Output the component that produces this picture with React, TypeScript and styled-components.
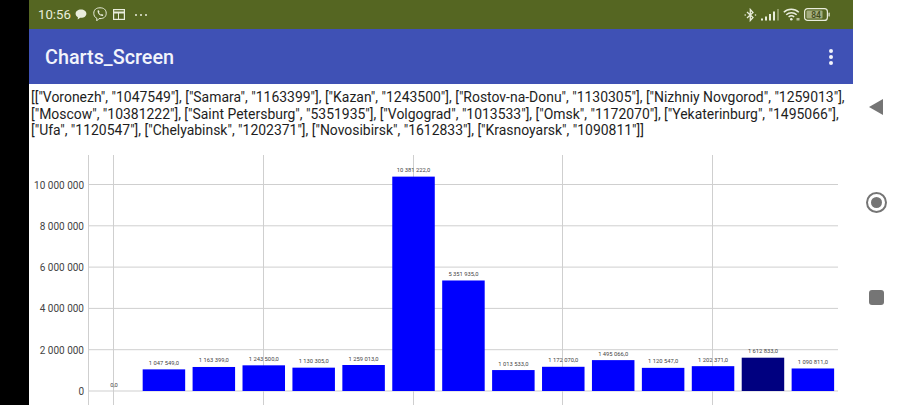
import React from 'react';
import styled, {createGlobalStyle} from 'styled-components';

const GlobalStyle = createGlobalStyle`
  html, body {
    margin: 0;
    height: 100%;
    background: #fff;
    overflow: hidden;
  }
  #root {
    height: 100%;
  }
`;

const Device = styled.div`
  display: grid;
  grid-template-columns: 29px 824px 47px;
  width: 900px;
  height: 405px;
  overflow: hidden;
  font-family: Roboto, 'Liberation Sans', sans-serif;
`;

const Bezel = styled.div`
  background: #000;
`;

const Screen = styled.main`
  display: flex;
  flex-direction: column;
  min-width: 0;
  background: #fff;
`;

const StatusBar = styled.header`
  display: flex;
  align-items: center;
  height: 29px;
  padding: 0 23px 0 9px;
  box-sizing: border-box;
  background: #556622;
  color: #e9eddc;
`;

const Clock = styled.span`
  font-size: 13.2px;
  margin-right: 4px;
`;

const StatusGroup = styled.div`
  display: flex;
  align-items: center;
  gap: ${p => p.$gap}px;
`;

const Spacer = styled.div`
  flex: 1;
`;

const StatusDots = styled.span`
  display: flex;
  gap: 3px;
  margin-left: 10px;
`;

const StatusDot = styled.i`
  width: 2px;
  height: 2px;
  border-radius: 50%;
  background: #e9eddc;
`;

const AppBar = styled.div`
  display: flex;
  align-items: center;
  justify-content: space-between;
  height: 55px;
  padding: 2px 20px 0 16px;
  box-sizing: border-box;
  background: #3f51b5;
  color: #f2f4fb;
`;

const Title = styled.h1`
  margin: 0;
  font-size: 19.8px;
  font-weight: 500;
`;

const Overflow = styled.div`
  display: flex;
  flex-direction: column;
  gap: 1.5px;
  margin-top: -1px;
`;

const OverflowDot = styled.i`
  width: 4.5px;
  height: 4.5px;
  border-radius: 50%;
  background: #f2f4fb;
`;

const DataDump = styled.div`
  height: 71px;
  padding: 5px 0 0 2px;
  box-sizing: border-box;
  font-size: 13.95px;
  line-height: 16.5px;
  color: #1e1e1e;
`;

const DumpLine = styled.div`
  white-space: nowrap;
`;

const ChartFrame = styled.svg`
  display: block;
  width: 824px;
  height: 250px;
`;

const GridLine = styled.line`
  stroke: #cfcfcf;
  stroke-width: 1;
`;

const AxisLabel = styled.text`
  font-size: 10px;
  fill: #444;
  text-anchor: end;
`;

const ValueLabel = styled.text`
  font-size: 5.8px;
  fill: #444;
  text-anchor: middle;
`;

const NavRail = styled.nav`
  display: grid;
  grid-auto-rows: 95.5px;
  justify-items: center;
  align-items: center;
  align-content: start;
  padding-top: 59px;
  padding-right: 1px;
  background: #fff;
`;

const BackTriangle = styled.div`
  width: 0;
  height: 0;
  border-top: 8.5px solid transparent;
  border-bottom: 8.5px solid transparent;
  border-right: 14px solid #757575;
`;

const HomeRing = styled.div`
  display: flex;
  align-items: center;
  justify-content: center;
  width: 21px;
  height: 21px;
  box-sizing: border-box;
  border: 2px solid #757575;
  border-radius: 50%;

  &::after {
    content: '';
    width: 11px;
    height: 11px;
    border-radius: 50%;
    background: #757575;
  }
`;

const RecentSquare = styled.div`
  width: 15px;
  height: 15px;
  border-radius: 3px;
  background: #757575;
`;

const dumpLines = [
  '[["Voronezh", "1047549"], ["Samara", "1163399"], ["Kazan", "1243500"], ["Rostov-na-Donu", "1130305"], ["Nizhniy Novgorod", "1259013"],',
  '["Moscow", "10381222"], ["Saint Petersburg", "5351935"], ["Volgograd", "1013533"], ["Omsk", "1172070"], ["Yekaterinburg", "1495066"],',
  '["Ufa", "1120547"], ["Chelyabinsk", "1202371"], ["Novosibirsk", "1612833"], ["Krasnoyarsk", "1090811"]]',
];

const values = [
  0, 1047549, 1163399, 1243500, 1130305, 1259013, 10381222, 5351935, 1013533, 1172070, 1495066, 1120547, 1202371,
  1612833, 1090811,
];

const HIGHLIGHT = 13;
const BASE_Y = 236;
const PX_PER_UNIT = 206.5 / 10000000;
const AXIS_X = 60;
const RIGHT_X = 809;
const FIRST_X = 85;
const STEP_X = 49.92;
const BAR_W = 42.5;

const yOf = (v: number) => BASE_Y - v * PX_PER_UNIT;

const group = (v: number, suffix = '') => String(v).replace(/\B(?=(\d{3})+(?!\d))/g, ' ') + suffix;

const Chart = () => (
  <ChartFrame viewBox="0 0 824 250">
    {[AXIS_X - 0.5, 84.5, 234.5, 384.5, 533.5, 683.5].map(x => (
      <GridLine key={x} x1={x} x2={x} y1={0} y2={250} />
    ))}
    {[0, 2, 4, 6, 8, 10].map(m => (
      <React.Fragment key={m}>
        <GridLine x1={AXIS_X} x2={RIGHT_X} y1={yOf(m * 1000000)} y2={yOf(m * 1000000)} />
        <AxisLabel x={AXIS_X - 5} y={yOf(m * 1000000) + 4}>
          {group(m * 1000000)}
        </AxisLabel>
      </React.Fragment>
    ))}
    {values.map((v, i) => {
      const cx = FIRST_X + i * STEP_X;
      return (
        <React.Fragment key={i}>
          {v > 0 && (
            <rect
              x={cx - BAR_W / 2}
              y={yOf(v)}
              width={BAR_W}
              height={v * PX_PER_UNIT}
              fill={i === HIGHLIGHT ? '#000080' : '#0000ff'}
            />
          )}
          <ValueLabel x={cx} y={yOf(v) - 4.5}>
            {group(v, ',0')}
          </ValueLabel>
        </React.Fragment>
      );
    })}
  </ChartFrame>
);

const ChatIcon = () => (
  <svg width="12" height="11" viewBox="0 0 12 11">
    <path d="M6 .5C2.9.5.6 2.3.6 4.700c0 1.500.9 2.700 2.300 3.500L2.700 10.500 5.200 8.800H6c3.100 0 5.400-1.800 5.400-4.100S9.100.5 6 .5z" fill="#e9eddc" />
  </svg>
);

const ViberIcon = () => (
  <svg width="14" height="15" viewBox="0 0 14 15" fill="none" stroke="#e9eddc">
    <path d="M7 .8c3.600 0 6.200 1.700 6.200 5.400S10.600 11.600 7 11.600H6L3.800 13.800V11.200C1.700 10.300.8 8.500.8 6.200.8 2.500 3.400.8 7 .8z" strokeWidth="1" />
    <path d="M4.600 3.600l1.200-.3.800 1.600-.7.700c.4 1 1.100 1.700 2.100 2.100l.7-.7 1.600.8-.3 1.200c-3 .3-5.700-2.400-5.400-5.400z" fill="#e9eddc" stroke="none" />
  </svg>
);

const WidgetIcon = () => (
  <svg width="12" height="11" viewBox="0 0 12 11" fill="none" stroke="#e9eddc">
    <rect x=".6" y=".6" width="10.800" height="9.800" strokeWidth="1.200" />
    <path d="M.6 3.500h10.800" strokeWidth="2" />
    <path d="M5.500 4v6" strokeWidth="1" />
  </svg>
);

const BluetoothIcon = () => (
  <svg width="13" height="14" viewBox="0 0 13 14" fill="none" stroke="#e9eddc" strokeWidth="1.300">
    <path d="M3 4l6 5.500L6.300 12.500V1.500L9 4.500 3 10" />
    <circle cx="1.200" cy="7" r=".8" fill="#e9eddc" stroke="none" />
    <circle cx="11.500" cy="7" r=".8" fill="#e9eddc" stroke="none" />
  </svg>
);

const SignalIcon = () => (
  <svg width="18" height="12" viewBox="0 0 18 12">
    <rect x="0" y="9.500" width="2" height="2" fill="#e9eddc" />
    <rect x="4" y="7.500" width="2" height="4" fill="#e9eddc" />
    <rect x="8" y="5" width="2" height="6.500" fill="#e9eddc" />
    <rect x="12" y="2.500" width="2" height="9" fill="#e9eddc" />
    <rect x="16" y="0" width="2" height="11.500" fill="#8e9a63" />
  </svg>
);

const WifiIcon = () => (
  <svg width="17" height="13" viewBox="0 0 17 13" fill="none" stroke="#e9eddc" strokeWidth="1.500">
    <path d="M.8 4.200C5 .2 11.500.2 15.800 4.200" />
    <path d="M3.200 6.700c3-2.700 7.500-2.700 10.500 0" />
    <path d="M5.600 9c1.700-1.400 3.900-1.400 5.600 0" />
    <circle cx="8.300" cy="11.300" r="1.300" fill="#e9eddc" stroke="none" />
    <rect x="13.500" y="10" width="3" height="2.500" fill="#b9c19a" stroke="none" />
  </svg>
);

const BatteryIcon = () => (
  <svg width="26" height="13" viewBox="0 0 26 13">
    <rect x=".6" y=".6" width="22.800" height="11.800" rx="3" fill="none" stroke="#e9eddc" strokeWidth="1.200" />
    <rect x="2.500" y="2.500" width="16" height="8" rx="1" fill="#a3ad7e" />
    <rect x="24.500" y="4.500" width="1.200" height="4" rx=".6" fill="#e9eddc" />
    <text x="12" y="10" fontSize="8.500" fontWeight="500" fontFamily="Roboto, sans-serif" textAnchor="middle" fill="#3f4a18">
      84
    </text>
  </svg>
);

export default function App() {
  return (
    <>
      <GlobalStyle />
      <Device>
        <Bezel />
        <Screen>
          <StatusBar>
            <Clock>10:56</Clock>
            <StatusGroup $gap={6}>
              <ChatIcon />
              <ViberIcon />
              <WidgetIcon />
            </StatusGroup>
            <StatusDots>
              <StatusDot />
              <StatusDot />
              <StatusDot />
            </StatusDots>
            <Spacer />
            <StatusGroup $gap={4}>
              <BluetoothIcon />
              <SignalIcon />
              <WifiIcon />
              <BatteryIcon />
            </StatusGroup>
          </StatusBar>
          <AppBar>
            <Title>Charts_Screen</Title>
            <Overflow>
              <OverflowDot />
              <OverflowDot />
              <OverflowDot />
            </Overflow>
          </AppBar>
          <DataDump>
            {dumpLines.map(line => (
              <DumpLine key={line}>{line}</DumpLine>
            ))}
          </DataDump>
          <Chart />
        </Screen>
        <NavRail>
          <BackTriangle />
          <HomeRing />
          <RecentSquare />
        </NavRail>
      </Device>
    </>
  );
}
